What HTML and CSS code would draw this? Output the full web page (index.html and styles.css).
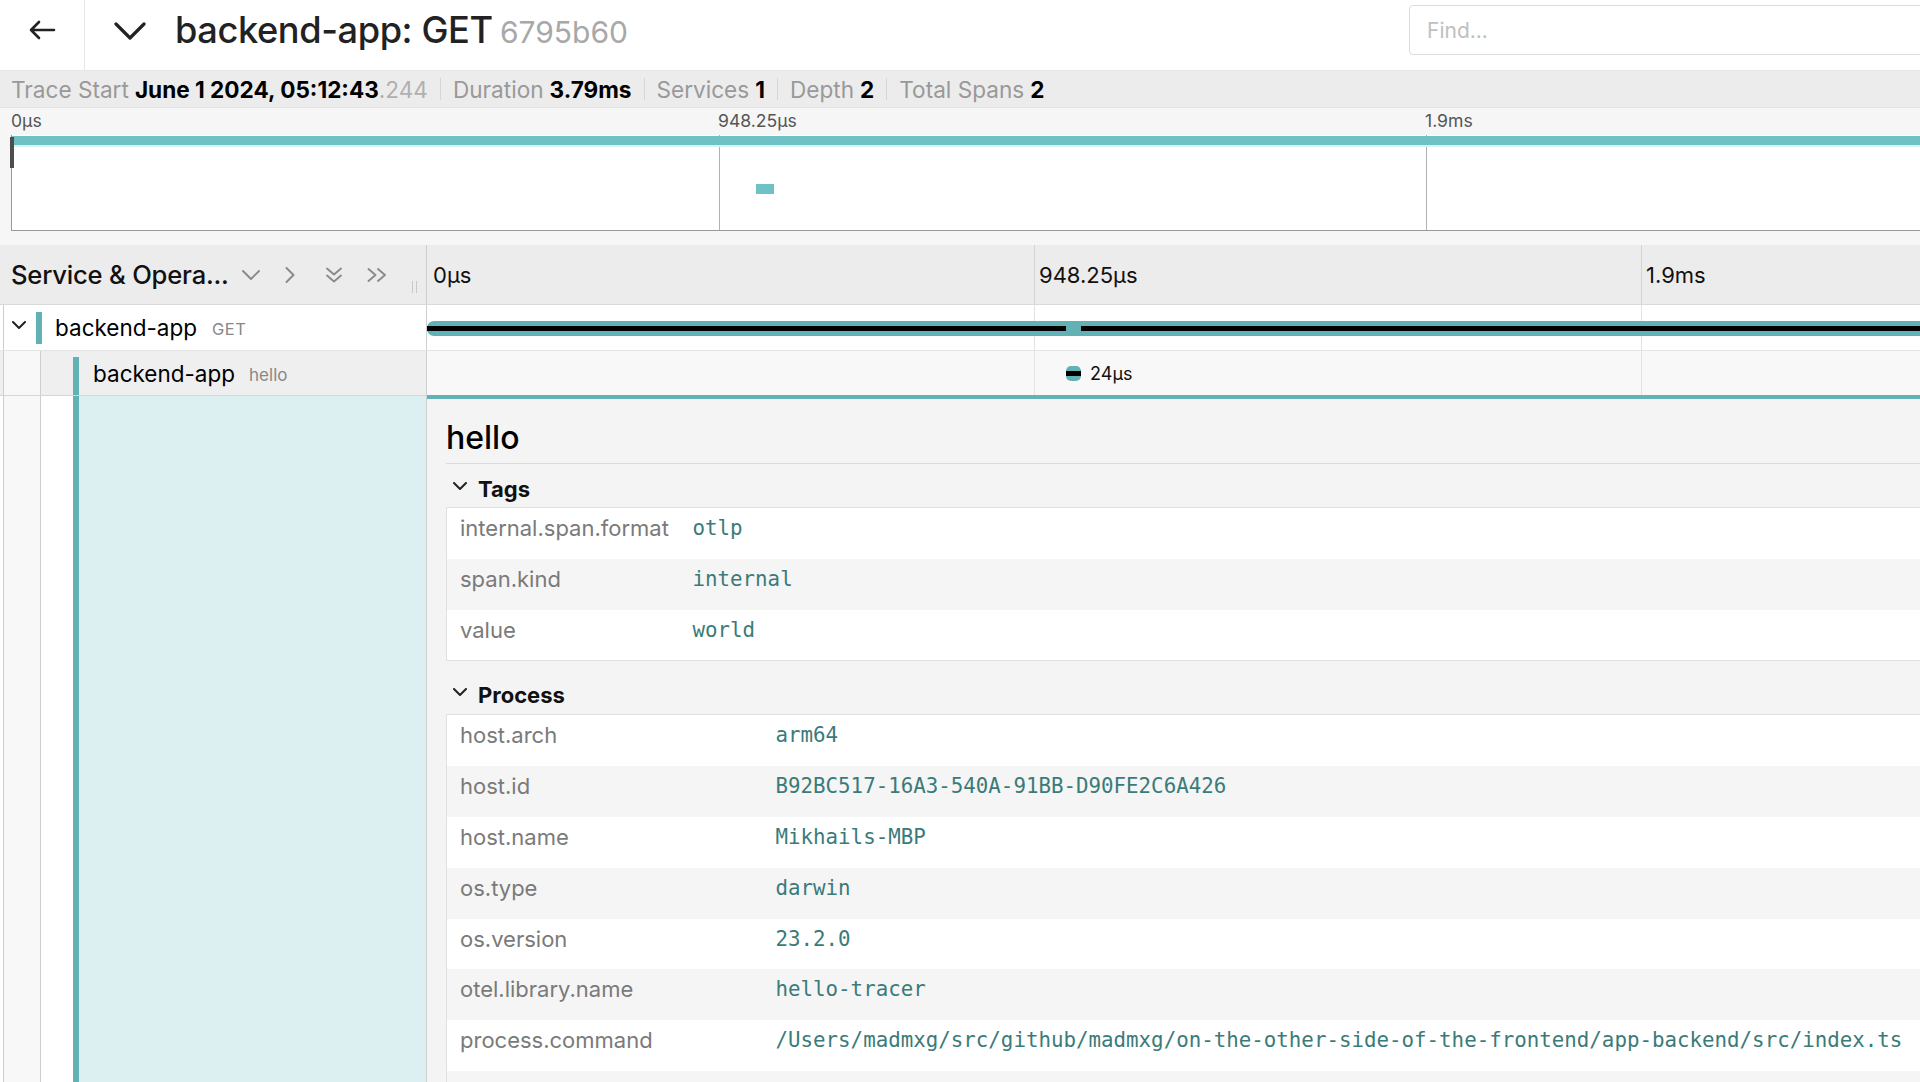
FILE: index.html
```html
<!DOCTYPE html>
<html lang="en">
<head>
<meta charset="utf-8">
<title>backend-app: GET 6795b60</title>
<link rel="stylesheet" href="styles.css">
</head>
<body>
<div class="page">
  <header class="top-bar">
    <a class="back-btn" href="#" aria-label="Back">
      <svg width="28" height="20" viewBox="0 0 28 20"><path d="M26 10H3M11 2L3 10l8 8" fill="none" stroke="#222" stroke-width="2.6" stroke-linecap="round" stroke-linejoin="round"/></svg>
    </a>
    <div class="title">
      <svg class="title-chevron" width="32" height="20" viewBox="0 0 32 20"><path d="M2 3l14 14L30 3" fill="none" stroke="#222" stroke-width="3.2" stroke-linecap="round" stroke-linejoin="round"/></svg>
      <h1 class="title-text">backend-app: GET <small class="trace-id">6795b60</small></h1>
    </div>
    <div class="find-wrap"><input class="find" type="text" placeholder="Find..."></div>
  </header>

  <div class="info-bar">
    <span class="info-label">Trace Start</span><strong class="info-val">June 1 2024, 05:12:43</strong><span class="info-ms">.244</span>
    <span class="sep"></span>
    <span class="info-label">Duration</span><strong class="info-val">3.79ms</strong>
    <span class="sep"></span>
    <span class="info-label">Services</span><strong class="info-val">1</strong>
    <span class="sep"></span>
    <span class="info-label">Depth</span><strong class="info-val">2</strong>
    <span class="sep"></span>
    <span class="info-label">Total Spans</span><strong class="info-val">2</strong>
  </div>

  <section class="minimap">
    <div class="mm-ruler">
      <span class="mm-tick" style="left:0%">0µs</span>
      <span class="mm-tick" style="left:25%">948.25µs</span>
      <span class="mm-tick" style="left:50%">1.9ms</span>
    </div>
    <div class="mm-canvas">
      <i class="mm-grid" style="left:25%"></i>
      <i class="mm-grid" style="left:50%"></i>
      <span class="mm-span mm-span-root"></span>
      <span class="mm-span mm-span-child" style="left:26.33%"></span>
      <span class="mm-handle"></span>
    </div>
  </section>

  <section class="timeline">
    <div class="tl-row tl-header">
      <div class="tl-left head-left">
        <span class="head-title">Service &amp; Opera...</span>
        <svg class="hicon hi-down" width="18" height="10" viewBox="0 0 18 10"><path d="M1 1l8 8 8-8" /></svg>
        <svg class="hicon hi-right" width="10" height="16" viewBox="0 0 10 16"><path d="M1.5 1l7 7-7 7" /></svg>
        <svg class="hicon hi-ddown" width="18" height="16" viewBox="0 0 18 16"><path d="M2 1.5l7 6 7-6M2 8.5l7 6 7-6" /></svg>
        <svg class="hicon hi-dright" width="20" height="14" viewBox="0 0 20 14"><path d="M1.5 1l7 6-7 6M11 1l7 6-7 6" /></svg>
        <span class="resizer"></span>
      </div>
      <div class="tl-right">
        <div class="track">
          <span class="tick" style="left:0%">0µs</span>
          <span class="tick tick-line" style="left:25%">948.25µs</span>
          <span class="tick tick-line" style="left:50%">1.9ms</span>
        </div>
      </div>
    </div>

    <div class="tl-row row-parent">
      <div class="tl-left">
        <div class="guide guide-root">
          <svg class="row-chev" width="14" height="9" viewBox="0 0 14 9"><path d="M1 1l6 6 6-6" /></svg>
        </div>
        <span class="svc-bar"></span>
        <span class="svc-name">backend-app</span><span class="op-name">GET</span>
      </div>
      <div class="tl-right">
        <div class="track">
          <i class="gridline" style="left:25%"></i>
          <i class="gridline" style="left:50%"></i>
          <div class="span-bar span-root" style="left:0;width:100%">
            <span class="cp-line" style="left:0;width:26.32%"></span>
            <span class="cp-line" style="left:26.94%;right:0"></span>
          </div>
        </div>
      </div>
    </div>

    <div class="tl-row row-child">
      <div class="tl-left">
        <div class="guide guide-root guide-light"></div>
        <div class="guide guide-lvl1"></div>
        <span class="svc-bar svc-bar-child"></span>
        <span class="svc-name">backend-app</span><span class="op-name op-lower">hello</span>
      </div>
      <div class="tl-right">
        <div class="track">
          <i class="gridline" style="left:25%"></i>
          <i class="gridline" style="left:50%"></i>
          <div class="span-bar span-pill" style="left:26.32%;width:0.62%">
            <span class="cp-line" style="left:0;right:0"></span>
          </div>
          <span class="span-label" style="left:26.94%">24µs</span>
        </div>
      </div>
    </div>

    <div class="tl-row row-detail">
      <div class="tl-left detail-left">
        <div class="guide guide-root guide-light"></div>
        <div class="guide guide-lvl1 guide-white"></div>
        <span class="svc-bar svc-bar-full"></span>
        <div class="detail-fill"></div>
      </div>
      <div class="detail-right">
        <div class="detail-inner">
          <h2 class="detail-title">hello</h2>
          <div class="kv-section">
            <div class="kv-head">
              <svg class="sec-chev" width="14" height="9" viewBox="0 0 14 9"><path d="M1 1l6 6 6-6" /></svg>
              <span>Tags</span>
            </div>
            <table class="kv-table">
              <colgroup><col class="kcol-tags"><col></colgroup>
              <tbody>
                <tr><td class="k">internal.span.format</td><td class="v">otlp</td></tr>
                <tr><td class="k">span.kind</td><td class="v">internal</td></tr>
                <tr><td class="k">value</td><td class="v">world</td></tr>
              </tbody>
            </table>
          </div>
          <div class="kv-section kv-process">
            <div class="kv-head">
              <svg class="sec-chev" width="14" height="9" viewBox="0 0 14 9"><path d="M1 1l6 6 6-6" /></svg>
              <span>Process</span>
            </div>
            <table class="kv-table">
              <colgroup><col class="kcol-process"><col></colgroup>
              <tbody>
                <tr><td class="k">host.arch</td><td class="v">arm64</td></tr>
                <tr><td class="k">host.id</td><td class="v">B92BC517-16A3-540A-91BB-D90FE2C6A426</td></tr>
                <tr><td class="k">host.name</td><td class="v">Mikhails-MBP</td></tr>
                <tr><td class="k">os.type</td><td class="v">darwin</td></tr>
                <tr><td class="k">os.version</td><td class="v">23.2.0</td></tr>
                <tr><td class="k">otel.library.name</td><td class="v">hello-tracer</td></tr>
                <tr><td class="k">process.command</td><td class="v">/Users/madmxg/src/github/madmxg/on-the-other-side-of-the-frontend/app-backend/src/index.ts</td></tr>
                <tr class="kv-last"><td class="k"></td><td class="v"></td></tr>
              </tbody>
            </table>
          </div>
        </div>
      </div>
    </div>
  </section>
</div>
</body>
</html>
```

FILE: styles.css
```css
* { box-sizing: border-box; margin: 0; padding: 0; }
html, body { width: 1920px; height: 1082px; overflow: hidden; background: #fff; }
body { font-family: Inter, "Noto Sans", "Liberation Sans", sans-serif; color: #000; }
.page { width: 1920px; height: 1082px; overflow: hidden; }

/* top bar */
.top-bar { display: flex; height: 70px; background: #fff; }
.back-btn { flex: 0 0 85px; border-right: 1px solid #e6e6e6; display: flex; align-items: center; justify-content: center; padding-bottom: 10px; }
.title { flex: 1; display: flex; align-items: center; padding-left: 29px; padding-bottom: 10px; }
.title-chevron { margin-right: 29px; margin-top: 2px; }
.title-text { font-size: 36.2px; font-weight: 500; color: #222; letter-spacing: -0.4px; white-space: nowrap; line-height: 1; }
.trace-id { font-size: 30px; font-weight: 400; color: #a8a8a8; letter-spacing: 0; margin-left: -2px; }
.find-wrap { flex: 0 0 511px; overflow: hidden; padding-top: 5px; }
.find { width: 620px; height: 50px; border: 1px solid #dcdcdc; border-radius: 4px; padding-left: 17px; font-family: inherit; font-size: 21px; color: #333; outline: none; }
.find::placeholder { color: #c0c0c0; }

/* info bar */
.info-bar { height: 38px; background: #ececec; border-top: 1px solid #e8e8e8; border-bottom: 1px solid #e2e2e2; display: flex; align-items: center; padding-left: 11px; font-size: 22.6px; white-space: nowrap; }
.info-label { color: #999; }
.info-val { color: #000; font-weight: 700; margin-left: 6px; }
.info-ms { color: #b0b0b0; }
.sep { width: 1px; height: 22px; background: #d6d6d6; margin: 0 12px; }

/* minimap */
.minimap { height: 137px; background: #f6f6f6; padding-left: 11px; }
.mm-ruler { position: relative; width: 2828px; height: 27px; }
.mm-tick { position: absolute; top: 3px; font-size: 17.6px; color: #555; line-height: 20px; }
.mm-canvas { position: relative; width: 2828px; height: 96px; background: #fff; border-left: 1px solid #999; border-bottom: 1px solid #999; }
.mm-grid { position: absolute; top: 0; bottom: 0; width: 1px; background: #b0b0b0; }
.mm-span { position: absolute; background: #6ec2c6; }
.mm-span-root { left: 0; right: 0; top: 1px; height: 9px; box-shadow: 0 2px 0 #d9f3f3; }
.mm-span-child { top: 49px; width: 18px; height: 10px; }
.mm-handle { position: absolute; left: -2px; top: 2px; width: 4px; height: 31px; background: #4d4d4d; }

/* timeline */
.timeline { width: 1920px; }
.tl-row { display: flex; }
.tl-left { flex: 0 0 427px; border-right: 1px solid #cfcfcf; display: flex; align-items: center; padding-left: 3px; }
.tl-right { flex: 1; position: relative; overflow: hidden; }
.track { position: absolute; left: 0; top: 0; bottom: 0; width: 2428px; }

.tl-header { height: 60px; background: #ececec; border-bottom: 1px solid #d9d9d9; }
.head-left { padding-left: 11px; }
.head-title { width: 224px; font-size: 25.6px; font-weight: 500; white-space: nowrap; color: #111; letter-spacing: -0.2px; }
.hicon { fill: none; stroke: #8a8a8a; stroke-width: 1.9; stroke-linecap: round; stroke-linejoin: round; flex: 0 0 auto; }
.hi-down { margin-left: 7px; }
.hi-right { margin-left: 25px; }
.hi-ddown { margin-left: 30px; }
.hi-dright { margin-left: 24px; }
.resizer { margin-left: 25px; margin-top: 24px; width: 5px; height: 12px; border-left: 1px solid #c8c8c8; border-right: 1px solid #c8c8c8; }
.tick { position: absolute; top: 0; bottom: 0; display: flex; align-items: center; padding-left: 6px; font-size: 22px; color: #111; }
.tick-line { border-left: 1px solid #d4d4d4; padding-left: 4px; }

.guide { align-self: stretch; border-left: 1px solid #cdcdcd; }
.guide-root { flex: 0 0 33px; display: flex; align-items: center; }
.guide-light { flex-basis: 37px; background: #f8f8f8; }
.guide-lvl1 { flex: 0 0 33px; }
.guide-white { background: #fff; }
.row-chev { margin-left: 8px; margin-top: -4px; fill: none; stroke: #222; stroke-width: 2; stroke-linecap: round; stroke-linejoin: round; }
.svc-bar { flex: 0 0 6px; width: 6px; height: 32px; background: #62b1b5; }
.svc-bar-child { align-self: stretch; height: auto; margin-top: 6px; }
.svc-bar-full { align-self: stretch; height: auto; }
.svc-name { margin-left: 13px; font-size: 22.5px; color: #000; white-space: nowrap; }
.op-name { margin-left: 15px; font-size: 16.5px; color: #888; letter-spacing: 0.5px; margin-top: 3px; }
.op-lower { letter-spacing: 0; font-size: 17px; margin-left: 14px; }

.row-parent { height: 46px; border-bottom: 1px solid #e4e4e4; background: #fff; }
.row-parent .tl-left { background: #fff; }
.row-child { height: 45px; }
.row-child .tl-left { background: #efefef; border-bottom: 1px solid #d6d6d6; }
.row-child .svc-name { margin-left: 14px; }
.row-child .tl-right { background: #f8f8f8; border-bottom: 1px solid #62b1b5; }

.gridline { position: absolute; top: 0; bottom: 0; width: 1px; background: #e2e2e2; }
.span-bar { position: absolute; background: #62b1b5; }
.span-root { top: 16px; height: 15px; border-radius: 7px 0 0 7px; }
.span-pill { top: 15px; height: 15px; border-radius: 5px; }
.cp-line { position: absolute; top: 5px; height: 5px; background: #000; }
.span-label { position: absolute; top: 12px; margin-left: 9px; font-size: 18px; color: #111; line-height: 22px; }

/* detail */
.row-detail { height: 700px; }
.detail-left { align-items: stretch; }
.detail-fill { flex: 1; background: #dcf0f2; }
.detail-right { flex: 1; overflow: hidden; background: #f4f4f4; border-top: 3px solid #62b1b5; padding-left: 19px; }
.detail-inner { width: 2380px; }
.detail-title { font-size: 32px; font-weight: 500; line-height: 40px; padding-top: 19px; padding-bottom: 5px; border-bottom: 1px solid #d9d9d9; color: #000; }
.kv-head { display: flex; align-items: center; height: 30px; font-size: 22px; font-weight: 700; color: #111; margin-top: 10px; margin-bottom: 3px; }
.kv-process .kv-head { margin-top: 19px; margin-bottom: 4px; }
.sec-chev { margin-left: 7px; margin-right: 11px; margin-top: -6px; fill: none; stroke: #222; stroke-width: 2; stroke-linecap: round; stroke-linejoin: round; }
.kv-table { border-collapse: collapse; table-layout: fixed; width: 100%; border: 1px solid #e0e0e0; background: #fff; }
.kcol-tags { width: 233px; }
.kcol-process { width: 316px; }
.kv-table tr:nth-child(even) td { background: #f5f5f5; }
.kv-table td { vertical-align: top; padding: 7px 13px 17.8px; line-height: 26px; white-space: nowrap; }
.kv-table .k { font-size: 22px; color: #7a7a7a; }
.kv-table .v { font-family: "DejaVu Sans Mono", "Liberation Mono", monospace; font-size: 20.8px; color: #3a7b7a; }
.kv-last td { height: 51px; }
```
